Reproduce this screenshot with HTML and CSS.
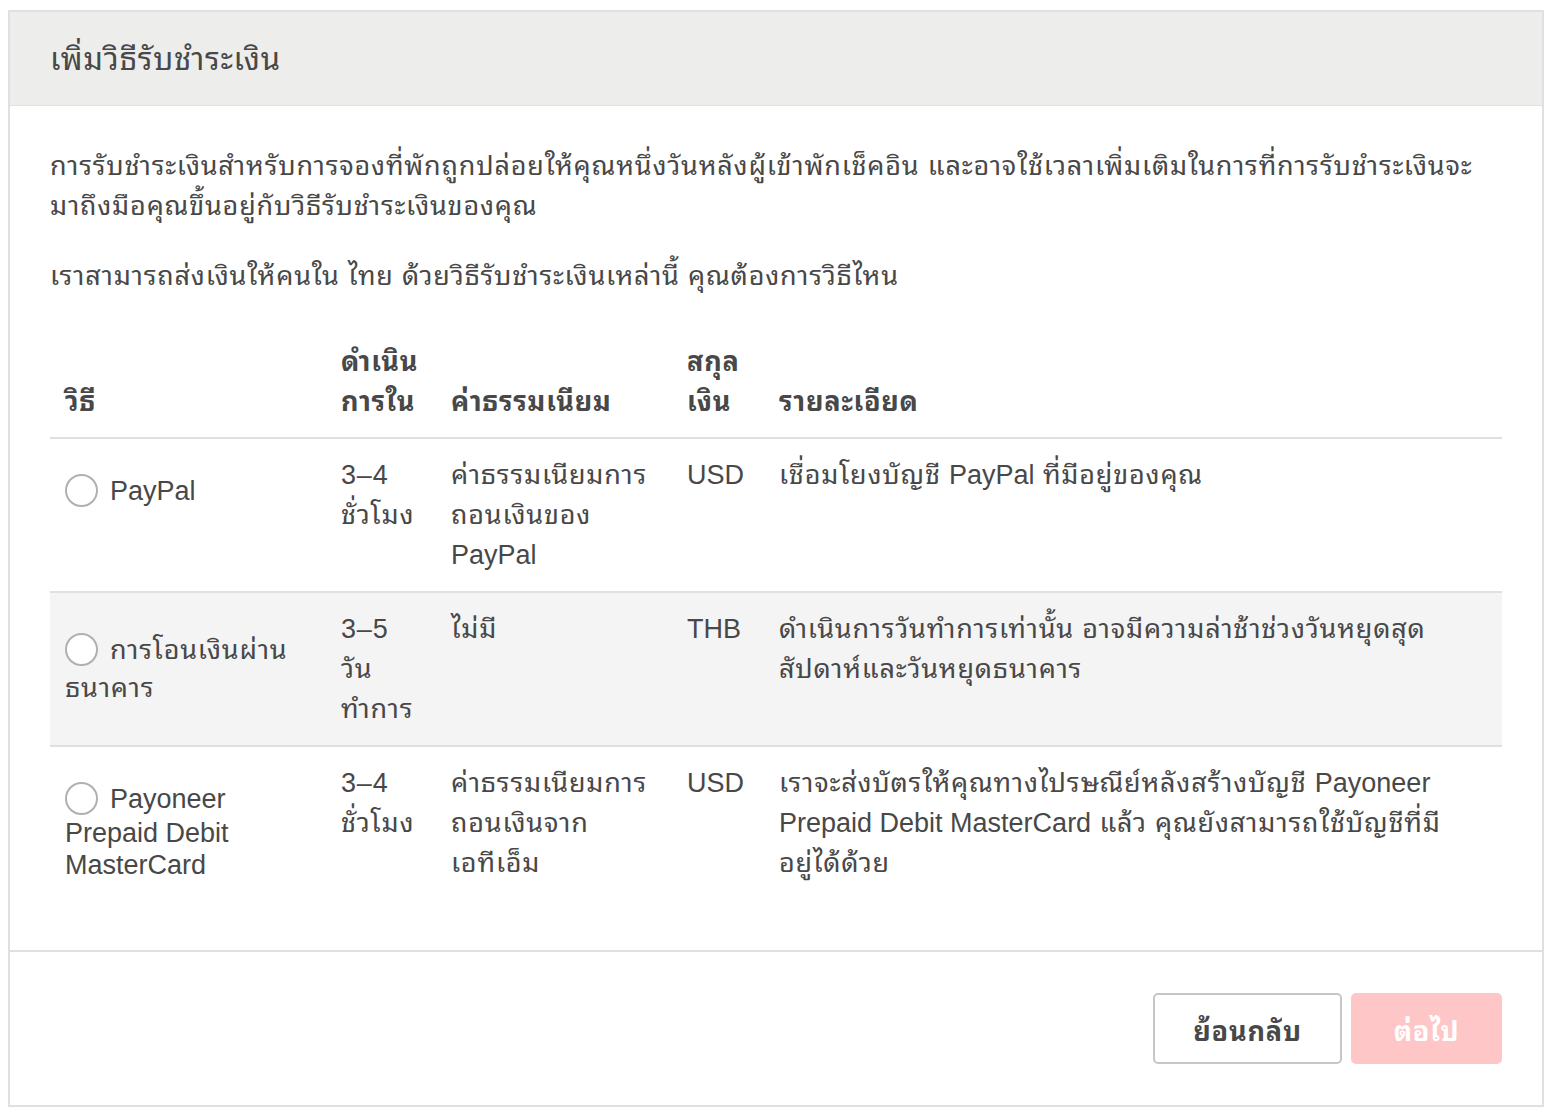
FILE: index.html
```html
<!DOCTYPE html>
<html lang="th">
<head>
<meta charset="utf-8">
<title>เพิ่มวิธีรับชำระเงิน</title>
<link rel="stylesheet" href="styles.css">
</head>
<body>
<div class="modal">
  <div class="modal-header">
    <h1 class="title">เพิ่มวิธีรับชำระเงิน</h1>
  </div>
  <div class="modal-body">
    <p class="para">การรับชำระเงินสำหรับการจองที่พักถูกปล่อยให้คุณหนึ่งวันหลังผู้เข้าพักเช็คอิน และอาจใช้เวลาเพิ่มเติมในการที่การรับชำระเงินจะ<br>มาถึงมือคุณขึ้นอยู่กับวิธีรับชำระเงินของคุณ</p>
    <p class="para">เราสามารถส่งเงินให้คนใน ไทย ด้วยวิธีรับชำระเงินเหล่านี้ คุณต้องการวิธีไหน</p>
    <table class="methods">
      <colgroup>
        <col class="c1"><col class="c2"><col class="c3"><col class="c4"><col class="c5">
      </colgroup>
      <thead>
        <tr>
          <th>วิธี</th>
          <th>ดำเนิน<br>การใน</th>
          <th>ค่าธรรมเนียม</th>
          <th>สกุล<br>เงิน</th>
          <th>รายละเอียด</th>
        </tr>
      </thead>
      <tbody>
        <tr>
          <td class="method"><label class="opt latin"><span class="radio"></span>PayPal</label></td>
          <td>3–4<br>ชั่วโมง</td>
          <td>ค่าธรรมเนียมการ<br>ถอนเงินของ<br><span class="latin">PayPal</span></td>
          <td class="latin">USD</td>
          <td>เชื่อมโยงบัญชี <span class="latin">PayPal</span> ที่มีอยู่ของคุณ</td>
        </tr>
        <tr class="alt">
          <td class="method thai"><label class="opt"><span class="radio"></span>การโอนเงินผ่าน<br>ธนาคาร</label></td>
          <td>3–5<br>วัน<br>ทำการ</td>
          <td>ไม่มี</td>
          <td class="latin">THB</td>
          <td>ดำเนินการวันทำการเท่านั้น อาจมีความล่าช้าช่วงวันหยุดสุด<br>สัปดาห์และวันหยุดธนาคาร</td>
        </tr>
        <tr class="last">
          <td class="method"><label class="opt latin"><span class="radio"></span>Payoneer<br>Prepaid Debit<br>MasterCard</label></td>
          <td>3–4<br>ชั่วโมง</td>
          <td>ค่าธรรมเนียมการ<br>ถอนเงินจาก<br>เอทีเอ็ม</td>
          <td class="latin">USD</td>
          <td>เราจะส่งบัตรให้คุณทางไปรษณีย์หลังสร้างบัญชี <span class="latin">Payoneer</span><br><span class="latin">Prepaid Debit MasterCard</span> แล้ว คุณยังสามารถใช้บัญชีที่มี<br>อยู่ได้ด้วย</td>
        </tr>
      </tbody>
    </table>
  </div>
  <div class="modal-footer">
    <button class="btn btn-back" type="button">ย้อนกลับ</button>
    <button class="btn btn-next" type="button">ต่อไป</button>
  </div>
</div>
</body>
</html>
```
FILE: styles.css
```css
* { box-sizing: border-box; }
html, body { margin: 0; padding: 0; background: #fff; }
body {
  font-family: "Liberation Sans", Arial, "Thonburi", "Noto Sans Thai Looped", "Loma", "Garuda", "Waree", "Noto Sans Thai", sans-serif;
  color: #484848;
  font-size: 27px;
  line-height: 40px;
  letter-spacing: 0.8px;
}
.latin { letter-spacing: 0; }
.modal {
  margin: 10px 12px 0 8px;
  width: 1536px;
  border: 2px solid #dde1df;
}
.modal-header {
  background: #edeeec;
  border-bottom: 1px solid #dde1df;
  height: 94px;
  padding: 0 40px;
  display: flex;
  align-items: center;
}
.title {
  margin: 2px 0 0 0;
  font-size: 31px;
  font-weight: normal;
  line-height: 40px;
}
.modal-body {
  padding: 40px 40px 51px 40px;
  border-bottom: 2px solid #dde1df;
}
.para {
  margin: 0 0 30px 0;
  white-space: nowrap;
}
.methods {
  width: 1452px;
  border-collapse: collapse;
  table-layout: fixed;
  margin-top: 46px;
}
.c1 { width: 276px; }
.c2 { width: 110px; }
.c3 { width: 236px; }
.c4 { width: 92px; }
.c5 { width: auto; }
.methods th {
  text-align: left;
  font-weight: bold;
  vertical-align: bottom;
  padding: 0 15px 15px 15px;
  border-bottom: 2px solid #dde1df;
  white-space: nowrap;
}
.methods td {
  vertical-align: top;
  padding: 16px 15px 16px 15px;
  white-space: nowrap;
}
.methods tbody tr { border-bottom: 2px solid #dde1df; }
.methods tbody tr.last { border-bottom: none; }
.methods tr.alt td { background: #f4f4f4; }
.methods td.method { padding-top: 36px; line-height: 32px; }
.methods td.method.thai { padding-top: 38px; line-height: 38px; }
.radio {
  display: inline-block;
  width: 33px;
  height: 33px;
  border: 2px solid #b0b0b0;
  border-radius: 50%;
  background: #fff;
  vertical-align: middle;
  margin-right: 12px;
  position: relative;
  top: -2px;
}
.modal-footer {
  display: flex;
  justify-content: flex-end;
  gap: 9px;
  padding: 41px 40px 41px 40px;
}
.btn {
  height: 71px;
  font-family: inherit;
  font-size: 27px;
  font-weight: bold;
  letter-spacing: 0.8px;
  border-radius: 5px;
  cursor: pointer;
}
.btn-back {
  width: 189px;
  background: #fff;
  color: #484848;
  border: 2px solid #c6c6c6;
}
.btn-next {
  width: 151px;
  background: #ffc6c7;
  color: #fff;
  border: none;
}
```
